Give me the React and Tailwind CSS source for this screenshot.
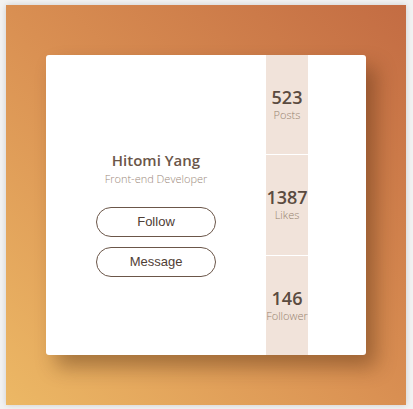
const stats = [
  { value: "523", label: "Posts" },
  { value: "1387", label: "Likes" },
  { value: "146", label: "Follower" },
];

export default function App() {
  return (
    <div className="w-[413px] h-[409px] bg-[#f2f2f2] pt-[5px] pl-[6px] font-['Open_Sans',sans-serif]">
      <div className="w-[400px] h-[400px] bg-linear-to-tr from-[#ecb865] via-[#d98f52] to-[#c36c43] pt-[50px] pl-[40px] shadow-[0_0_6px_rgba(0,0,0,0.15)]">
        {/* Card */}
        <div className="w-[320px] h-[300px] bg-white rounded-[3px] flex overflow-hidden shadow-[10px_12px_20px_rgba(70,35,10,0.4)]">
          <div className="w-[220px] flex flex-col items-center pt-[96px]">
            <h1 className="text-[15px] leading-[18px] font-semibold text-[#6b5649]">Hitomi Yang</h1>
            <p className="mt-[3px] text-[11px] leading-[14px] font-light text-[#9c897b]">Front-end Developer</p>
            <button className="mt-[21px] w-[120px] h-[30px] rounded-full border border-[#6b5649] text-[13px] text-[#4f4036] font-['Liberation_Sans',Arial,sans-serif]">
              Follow
            </button>
            <button className="mt-[10px] w-[120px] h-[30px] rounded-full border border-[#6b5649] text-[13px] text-[#4f4036] font-['Liberation_Sans',Arial,sans-serif]">
              Message
            </button>
          </div>

          {/* Stats column */}
          <div className="w-[42px] flex flex-col gap-px bg-white">
            {stats.map(s => (
              <div key={s.label} className="flex-1 bg-[#f1e3da] flex flex-col items-center justify-center">
                <span className="text-[18px] leading-[21px] font-semibold text-[#5b4b40]">{s.value}</span>
                <span className="text-[11px] leading-[14px] font-light text-[#96826f]">{s.label}</span>
              </div>
            ))}
          </div>
        </div>
      </div>
    </div>
  );
}
